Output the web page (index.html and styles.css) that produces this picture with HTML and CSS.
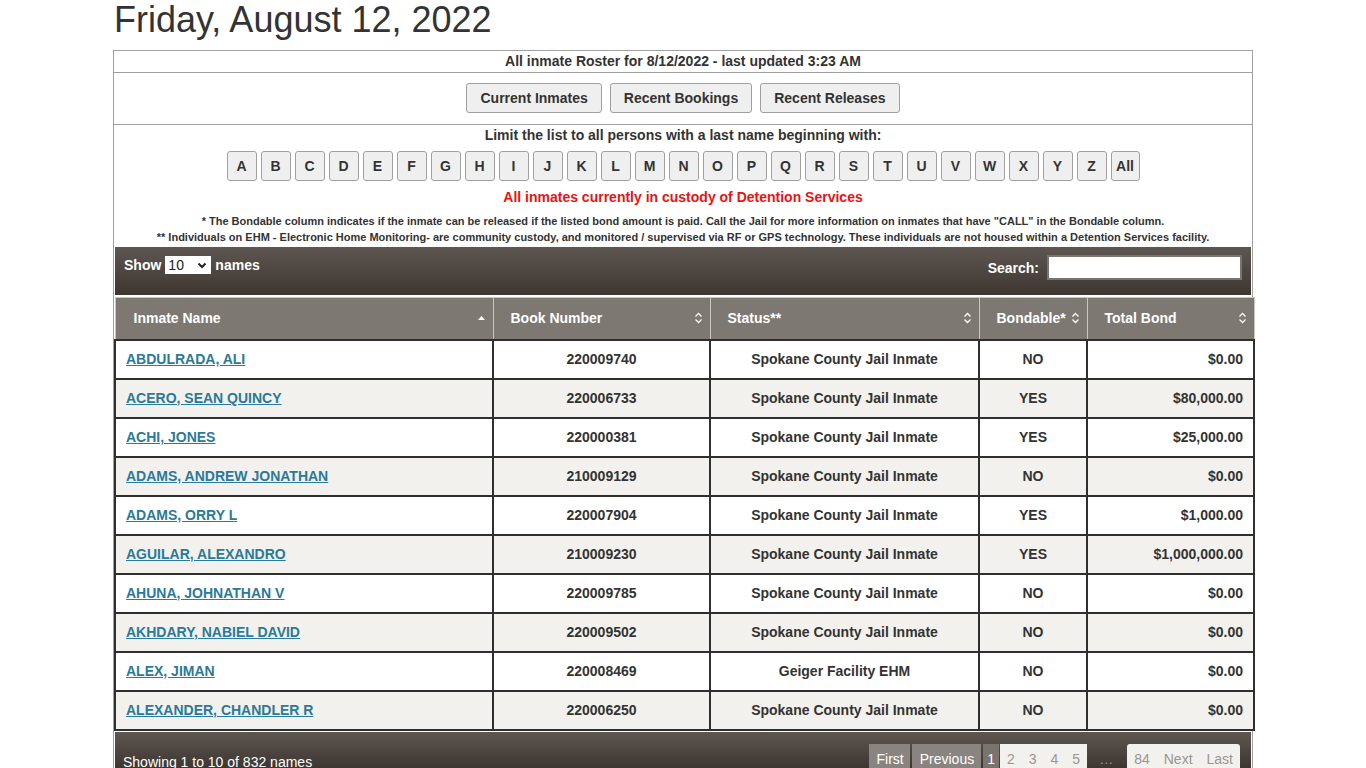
FILE: index.html
```html
<!DOCTYPE html>
<html>
<head>
<meta charset="utf-8">
<link rel="stylesheet" href="styles.css">
</head>
<body>
<div class="page">
  <h1 class="title">Friday, August 12, 2022</h1>
  <div class="box">
    <div class="row-updated">All inmate Roster for 8/12/2022 - last updated 3:23 AM</div>
    <div class="row-nav">
      <button class="btn">Current Inmates</button>
      <button class="btn">Recent Bookings</button>
      <button class="btn">Recent Releases</button>
    </div>
    <div class="row-filter">
      <div class="limit">Limit the list to all persons with a last name beginning with:</div>
      <div class="letters">
        <button class="letter">A</button><button class="letter">B</button><button class="letter">C</button><button class="letter">D</button><button class="letter">E</button><button class="letter">F</button><button class="letter">G</button><button class="letter">H</button><button class="letter">I</button><button class="letter">J</button><button class="letter">K</button><button class="letter">L</button><button class="letter">M</button><button class="letter">N</button><button class="letter">O</button><button class="letter">P</button><button class="letter">Q</button><button class="letter">R</button><button class="letter">S</button><button class="letter">T</button><button class="letter">U</button><button class="letter">V</button><button class="letter">W</button><button class="letter">X</button><button class="letter">Y</button><button class="letter">Z</button><button class="letter">All</button>
      </div>
      <div class="custody">All inmates currently in custody of Detention Services</div>
      <div class="notes">
        <div>* The Bondable column indicates if the inmate can be released if the listed bond amount is paid. Call the Jail for more information on inmates that have "CALL" in the Bondable column.</div>
        <div>** Individuals on EHM - Electronic Home Monitoring- are community custody, and monitored / supervised via RF or GPS technology. These individuals are not housed within a Detention Services facility.</div>
      </div>
    </div>

    <div class="toolbar">
      <div class="show">Show
        <span class="select">10
          <svg width="10" height="7" viewBox="0 0 10 7"><path d="M1.5 1.5 L5 5 L8.5 1.5" fill="none" stroke="#222" stroke-width="2"/></svg>
        </span>
        names</div>
      <label class="search">Search: <input type="text" class="search-input"></label>
    </div>

    <table class="roster">
      <colgroup>
        <col style="width:378px"><col style="width:217px"><col style="width:269px"><col style="width:108px"><col style="width:167px">
      </colgroup>
      <thead>
        <tr>
          <th><div class="th-in">Inmate Name<svg class="sort" width="9" height="12" viewBox="0 0 9 12"><path d="M1 8 L4.5 4 L8 8 Z" fill="#fff"/></svg></div></th>
          <th><div class="th-in">Book Number<svg class="sort" width="9" height="12" viewBox="0 0 9 12"><path d="M1.5 4.5 L4.5 1.5 L7.5 4.5 M1.5 7.5 L4.5 10.5 L7.5 7.5" fill="none" stroke="#fff" stroke-width="1.3"/></svg></div></th>
          <th><div class="th-in">Status**<svg class="sort" width="9" height="12" viewBox="0 0 9 12"><path d="M1.5 4.5 L4.5 1.5 L7.5 4.5 M1.5 7.5 L4.5 10.5 L7.5 7.5" fill="none" stroke="#fff" stroke-width="1.3"/></svg></div></th>
          <th><div class="th-in">Bondable*<svg class="sort" width="9" height="12" viewBox="0 0 9 12"><path d="M1.5 4.5 L4.5 1.5 L7.5 4.5 M1.5 7.5 L4.5 10.5 L7.5 7.5" fill="none" stroke="#fff" stroke-width="1.3"/></svg></div></th>
          <th><div class="th-in">Total Bond<svg class="sort" width="9" height="12" viewBox="0 0 9 12"><path d="M1.5 4.5 L4.5 1.5 L7.5 4.5 M1.5 7.5 L4.5 10.5 L7.5 7.5" fill="none" stroke="#fff" stroke-width="1.3"/></svg></div></th>
        </tr>
      </thead>
      <tbody>
        <tr><td class="name"><a href="#">ABDULRADA, ALI</a></td><td class="c">220009740</td><td class="c">Spokane County Jail Inmate</td><td class="c">NO</td><td class="r">$0.00</td></tr>
        <tr class="alt"><td class="name"><a href="#">ACERO, SEAN QUINCY</a></td><td class="c">220006733</td><td class="c">Spokane County Jail Inmate</td><td class="c">YES</td><td class="r">$80,000.00</td></tr>
        <tr><td class="name"><a href="#">ACHI, JONES</a></td><td class="c">220000381</td><td class="c">Spokane County Jail Inmate</td><td class="c">YES</td><td class="r">$25,000.00</td></tr>
        <tr class="alt"><td class="name"><a href="#">ADAMS, ANDREW JONATHAN</a></td><td class="c">210009129</td><td class="c">Spokane County Jail Inmate</td><td class="c">NO</td><td class="r">$0.00</td></tr>
        <tr><td class="name"><a href="#">ADAMS, ORRY L</a></td><td class="c">220007904</td><td class="c">Spokane County Jail Inmate</td><td class="c">YES</td><td class="r">$1,000.00</td></tr>
        <tr class="alt"><td class="name"><a href="#">AGUILAR, ALEXANDRO</a></td><td class="c">210009230</td><td class="c">Spokane County Jail Inmate</td><td class="c">YES</td><td class="r">$1,000,000.00</td></tr>
        <tr><td class="name"><a href="#">AHUNA, JOHNATHAN V</a></td><td class="c">220009785</td><td class="c">Spokane County Jail Inmate</td><td class="c">NO</td><td class="r">$0.00</td></tr>
        <tr class="alt"><td class="name"><a href="#">AKHDARY, NABIEL DAVID</a></td><td class="c">220009502</td><td class="c">Spokane County Jail Inmate</td><td class="c">NO</td><td class="r">$0.00</td></tr>
        <tr><td class="name"><a href="#">ALEX, JIMAN</a></td><td class="c">220008469</td><td class="c">Geiger Facility EHM</td><td class="c">NO</td><td class="r">$0.00</td></tr>
        <tr class="alt"><td class="name"><a href="#">ALEXANDER, CHANDLER R</a></td><td class="c">220006250</td><td class="c">Spokane County Jail Inmate</td><td class="c">NO</td><td class="r">$0.00</td></tr>
      </tbody>
    </table>

    <div class="footer">
      <div class="info">Showing 1 to 10 of 832 names</div>
      <div class="paging">
        <span class="pg dis pg-first">First</span>
        <span class="pg dis pg-prev">Previous</span>
        <span class="pg cur">1</span>
        <span class="pg lt">2</span><span class="pg lt">3</span><span class="pg lt">4</span><span class="pg lt">5</span>
        <span class="pg dots">…</span>
        <span class="pg lt first-lt">84</span><span class="pg lt">Next</span><span class="pg lt last-lt">Last</span>
      </div>
    </div>
  </div>
</div>
</body>
</html>
```

FILE: styles.css
```css
html, body {
  margin: 0;
  padding: 0;
  background: #fff;
}
body {
  font-family: "Liberation Sans", Arial, sans-serif;
  color: #333;
}
.page {
  width: 1140px;
  margin: 0 auto;
}
.title {
  margin: 0 0 10px 1px;
  font-size: 36px;
  font-weight: normal;
  line-height: 40px;
  color: #333;
}
.box {
  border: 1px solid #a0a0a0;
  border-bottom: none;
}
.row-updated {
  font-size: 14px;
  font-weight: bold;
  line-height: 21px;
  text-align: center;
  border-bottom: 1px solid #a0a0a0;
}
.row-nav {
  display: flex;
  justify-content: center;
  gap: 8px;
  padding: 10px 0 11px;
  border-bottom: 1px solid #a0a0a0;
}
.btn {
  height: 30px;
  padding: 0 13px;
  font-family: "Liberation Sans", Arial, sans-serif;
  font-size: 14px;
  font-weight: bold;
  color: #333;
  background: #efefef;
  border: 1px solid #a0a0a0;
  border-radius: 3px;
}
.row-filter {
  padding-top: 2px;
  text-align: center;
}
.limit {
  font-size: 14px;
  font-weight: bold;
  line-height: 16px;
}
.letters {
  display: flex;
  justify-content: center;
  gap: 4px;
  margin-top: 8px;
}
.letter {
  width: 30px;
  height: 30px;
  padding: 0;
  font-family: "Liberation Sans", Arial, sans-serif;
  font-size: 14px;
  font-weight: bold;
  color: #333;
  background: #efefef;
  border: 1px solid #a0a0a0;
  border-radius: 3px;
}
.letter:last-child {
  width: 29px;
}
.custody {
  margin-top: 8px;
  font-size: 14px;
  font-weight: bold;
  line-height: 16px;
  color: #ee1111;
}
.notes {
  margin-top: 8px;
  font-size: 11px;
  font-weight: bold;
  line-height: 16px;
  color: #333;
}
.toolbar {
  margin: 2px 1px 2px 1px;
  height: 48px;
  box-sizing: border-box;
  padding: 8px 9px 0 9px;
  display: flex;
  justify-content: space-between;
  align-items: flex-start;
  background: linear-gradient(#5d5651, #3d3631);
  color: #fff;
  font-size: 14px;
  font-weight: bold;
}
.show {
  display: flex;
  align-items: center;
  gap: 4px;
  height: 18px;
  margin-top: 1px;
}
.select {
  display: inline-flex;
  align-items: center;
  justify-content: space-between;
  width: 46px;
  height: 18px;
  box-sizing: border-box;
  padding: 0 4px 0 3px;
  background: #fff;
  color: #222;
  font-weight: normal;
  font-size: 14px;
}
.search {
  display: flex;
  align-items: center;
  gap: 8px;
  height: 25px;
}
.search-input {
  width: 195px;
  height: 25px;
  box-sizing: border-box;
  border: 2px solid #7a7470;
  background: #fff;
  margin: 0;
}
.roster {
  width: 1139px;
  margin-left: 0;
  border-collapse: collapse;
  table-layout: fixed;
  font-size: 14px;
  font-weight: bold;
}
.roster th {
  background: #7e7873;
  color: #fff;
  text-align: left;
  padding: 0 7px 0 17px;
  height: 42px;
  box-sizing: border-box;
  border-left: 1px solid #c9c5c1;
  border-right: 1px solid #c9c5c1;
  border-top: 1px solid #c9c5c1;
  border-bottom: 1px solid #d6d3d0;
}
.roster th:first-child {
  padding-left: 18px;
}
.th-in {
  display: flex;
  justify-content: space-between;
  align-items: center;
}
.sort {
  display: block;
}
.roster td {
  line-height: 37px;
  padding: 0 10px;
  border: 2px solid #2f2f2f;
  color: #333;
  white-space: nowrap;
  background: #fff;
}
.roster tr.alt td {
  background: #f2f1ee;
}
.roster td.c {
  text-align: center;
}
.roster td.r {
  text-align: right;
}
.roster td.name a {
  color: #2a7a99;
  text-decoration: underline;
}
.footer {
  margin: 1px 1px 0 1px;
  padding: 12px 11px 0 8px;
  height: 60px;
  box-sizing: border-box;
  display: flex;
  justify-content: space-between;
  align-items: flex-start;
  background: linear-gradient(#5d5651, #3d3631 60%);
  color: #fff;
}
.info {
  font-size: 14px;
  line-height: 16px;
  margin-top: 10px;
}
.paging {
  display: flex;
  font-size: 14px;
  line-height: 30px;
}
.pg {
  display: block;
  height: 30px;
  padding: 0 7px;
}
.pg.dis {
  background: #8a8480;
  color: #fff;
  margin-right: 2px;
}
.pg.pg-first {
  padding: 0 6px 0 7px;
}
.pg.pg-prev {
  padding: 0 7px 0 8px;
}
.pg.cur {
  background: #7a746f;
  color: #fff;
  padding: 0 4px;
  margin-right: 1px;
}
.pg.lt {
  background: #f2f1ee;
  color: #9a9590;
}
.pg.dots {
  color: #9a9590;
  padding: 0 14px 0 12px;
  background: transparent;
}
.pg.first-lt {
  border-top-left-radius: 3px;
}
.pg.last-lt {
  border-top-right-radius: 3px;
}
```
